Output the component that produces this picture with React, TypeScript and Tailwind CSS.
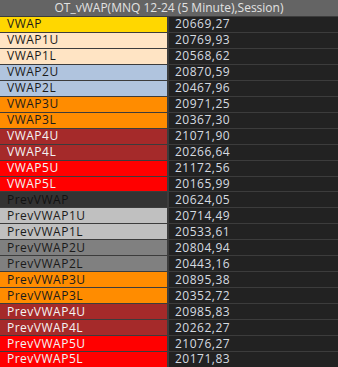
import React from "react";

type Row = { label: string; value: string; bg: string; fg: string };

const rows: Row[] = [
  { label: "VWAP", value: "20669,27", bg: "bg-[#ffd700]", fg: "text-[#1a1a1a]" },
  { label: "VWAP1U", value: "20769,93", bg: "bg-[#ffe4c4]", fg: "text-[#1a1a1a]" },
  { label: "VWAP1L", value: "20568,62", bg: "bg-[#ffe4c4]", fg: "text-[#1a1a1a]" },
  { label: "VWAP2U", value: "20870,59", bg: "bg-[#b0c4de]", fg: "text-[#1a1a1a]" },
  { label: "VWAP2L", value: "20467,96", bg: "bg-[#b0c4de]", fg: "text-[#1a1a1a]" },
  { label: "VWAP3U", value: "20971,25", bg: "bg-[#ff8c00]", fg: "text-[#1a1a1a]" },
  { label: "VWAP3L", value: "20367,30", bg: "bg-[#ff8c00]", fg: "text-[#1a1a1a]" },
  { label: "VWAP4U", value: "21071,90", bg: "bg-[#a52a2a]", fg: "text-[#f4f4f4]" },
  { label: "VWAP4L", value: "20266,64", bg: "bg-[#a52a2a]", fg: "text-[#f4f4f4]" },
  { label: "VWAP5U", value: "21172,56", bg: "bg-[#ff0000]", fg: "text-[#f4f4f4]" },
  { label: "VWAP5L", value: "20165,99", bg: "bg-[#ff0000]", fg: "text-[#f4f4f4]" },
  { label: "PrevVWAP", value: "20624,05", bg: "bg-[#333333]", fg: "text-[#111111]" },
  { label: "PrevVWAP1U", value: "20714,49", bg: "bg-[#c0c0c0]", fg: "text-[#1a1a1a]" },
  { label: "PrevVWAP1L", value: "20533,61", bg: "bg-[#c0c0c0]", fg: "text-[#1a1a1a]" },
  { label: "PrevVWAP2U", value: "20804,94", bg: "bg-[#808080]", fg: "text-[#1a1a1a]" },
  { label: "PrevVWAP2L", value: "20443,16", bg: "bg-[#808080]", fg: "text-[#1a1a1a]" },
  { label: "PrevVWAP3U", value: "20895,38", bg: "bg-[#ff8c00]", fg: "text-[#1a1a1a]" },
  { label: "PrevVWAP3L", value: "20352,72", bg: "bg-[#ff8c00]", fg: "text-[#1a1a1a]" },
  { label: "PrevVWAP4U", value: "20985,83", bg: "bg-[#a52a2a]", fg: "text-[#f4f4f4]" },
  { label: "PrevVWAP4L", value: "20262,27", bg: "bg-[#a52a2a]", fg: "text-[#f4f4f4]" },
  { label: "PrevVWAP5U", value: "21076,27", bg: "bg-[#ff0000]", fg: "text-[#f4f4f4]" },
  { label: "PrevVWAP5L", value: "20171,83", bg: "bg-[#ff0000]", fg: "text-[#f4f4f4]" },
];

export default function App() {
  return (
    <div
      className="w-[338px] h-[367px] bg-[#222222] flex flex-col overflow-hidden text-[12px] leading-none"
      style={{ fontFamily: '"Open Sans", "Liberation Sans", sans-serif' }}
    >
      <div className="h-[16px] shrink-0 bg-[#646464] text-[#e2e2e2] flex items-center justify-center">
        OT_vWAP(MNQ 12-24 (5 Minute),Session)
      </div>
      {rows.map((r) => (
        <div key={r.label} className="flex-1 flex border-t border-[#3c3c3c] min-h-0 tracking-[0.5px]">
          <div className={`w-[167px] shrink-0 ${r.bg} ${r.fg} flex items-center pl-[7px]`}>
            {r.label}
          </div>
          <div className="w-[2px] bg-[#3c3c3c]" />
          <div className="flex-1 bg-[#222222] text-[#d6dbe0] flex items-center pl-[6px]">
            {r.value}
          </div>
        </div>
      ))}
    </div>
  );
}
